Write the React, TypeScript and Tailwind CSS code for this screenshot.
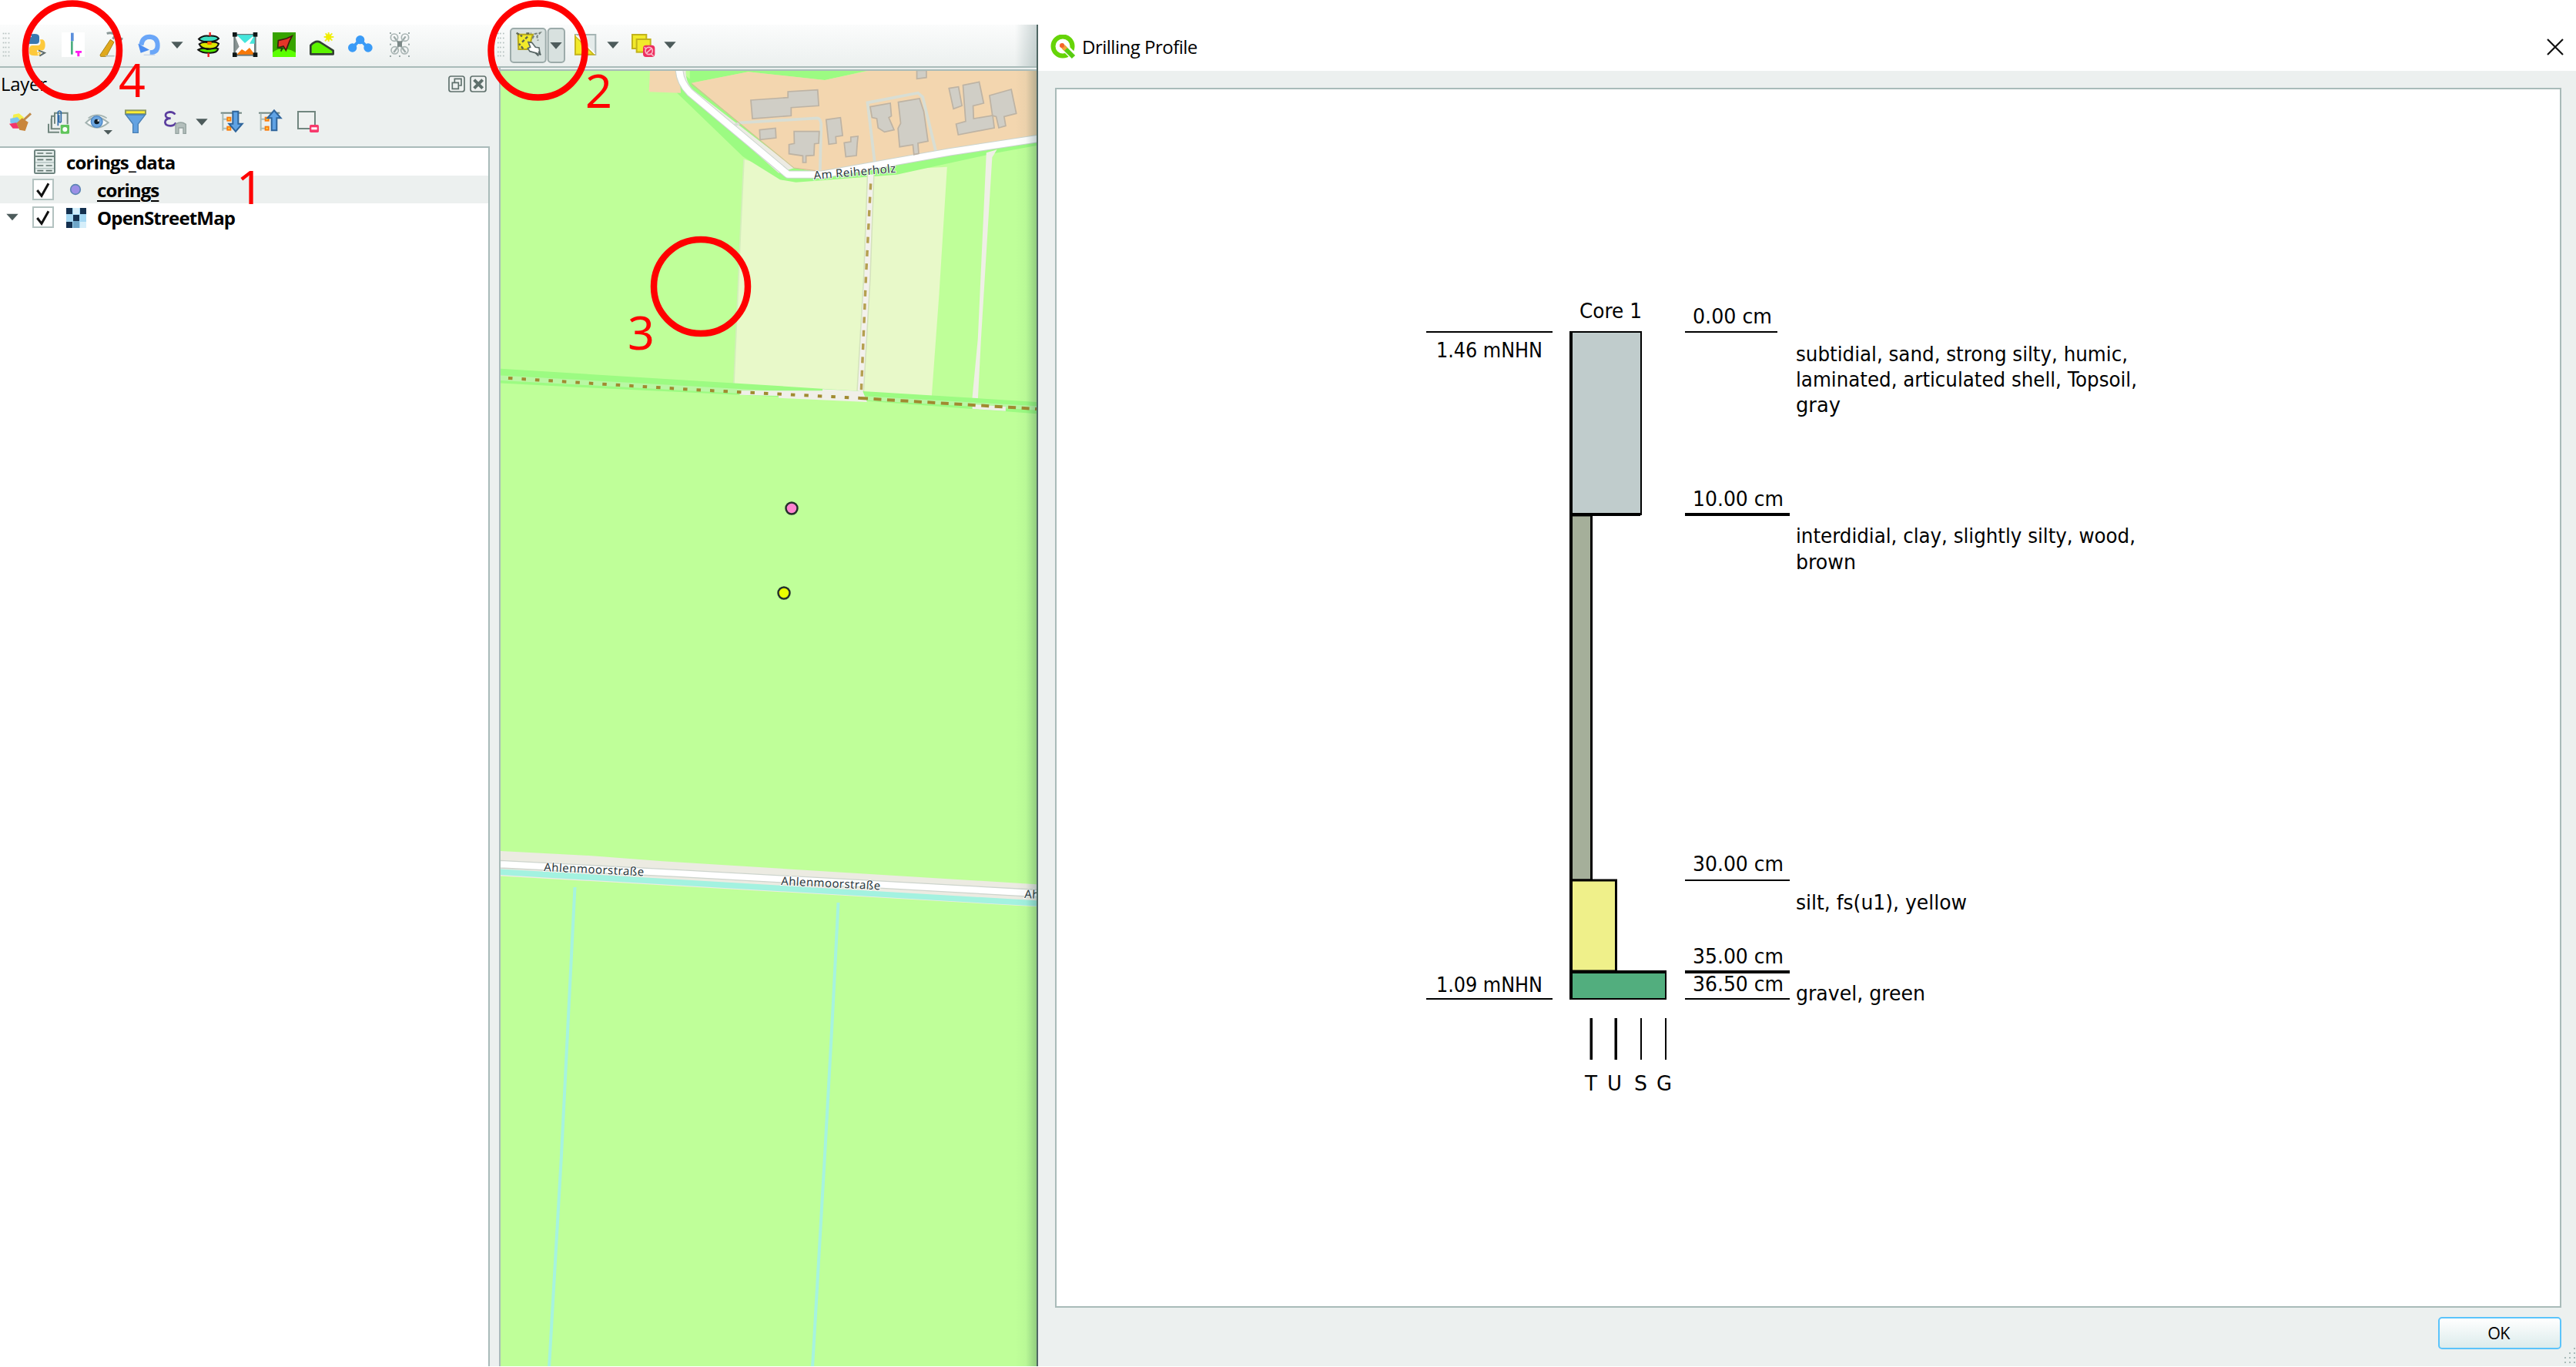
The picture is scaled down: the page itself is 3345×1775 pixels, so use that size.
import React from "react";

const UI = "font-['Open_Sans','Noto_Sans',sans-serif]";

/* Icon cell: draws one slot of a toolbar, three drawing units per pixel. */
function Slot({ x, y, w, h, className, children }: { x: number; y: number; w: number; h: number; className: string; children: React.ReactNode }) {
  return (
    <svg className={"block shrink-0 " + className} viewBox={`${x * 3} ${y * 3} ${w * 3} ${h * 3}`}>
      {children}
    </svg>
  );
}

function Grip({ x }: { x: number }) {
  return (
    <g fill="#b4bfbe">
      {[128, 146, 164, 182, 200, 215].map((y) => [0, 9, 21].map((d, i) => <rect key={y + "-" + i} x={x + d} y={y} width="5" height="5" />))}
    </g>
  );
}

const Caret = ({ x, y }: { x: number; y: number }) => <path d={`M${x - 23} ${y}h46l-23 26z`} fill="#4d5b5b" />;

function PluginToolbar() {
  return (
    <div className="flex h-[54px] w-[636px] shrink-0">
      <Slot x={0} y={32} w={28} h={54} className="w-[28px]"><Grip x={11} /></Slot>
      <Slot x={28} y={32} w={44} h={54} className="w-[44px]">
        <path d="M112 152v-10q0-10 22-10 19 0 19 12v15q0 12-13 12h-24q-10 0-12 13H94v-16q0-13 14-15z" fill="#3a78b0" />
        <path d="M156 154h10q10 4 10 22 0 16-10 20h-22v7h14v6q-2 8-22 8t-22-10v-18q2-12 13-12h22q9-1 9-12z" fill="#fdc93b" />
        <circle cx="120" cy="142" r="3" fill="#fff" /><circle cx="149" cy="210" r="3" fill="#fff" />
        <path d="M150 196l24 10-20 12" fill="none" stroke="#5d6b6b" strokeWidth="6" />
      </Slot>
      <Slot x={72} y={32} w={48} h={54} className="w-[48px]">
        <rect x="240" y="126" width="90" height="96" fill="#fff" />
        <rect x="276" y="128" width="11" height="32" fill="#5b8fdc" />
        <rect x="276" y="160" width="8" height="52" fill="#4cae80" />
        <path d="M294 198h24v8h-8v14h-9v-14h-7z" fill="#ff1df0" />
      </Slot>
      <Slot x={120} y={32} w={52} h={54} className="w-[52px]">
        <path d="M390 214l40-60 14 10-30 56h-22z" fill="#e0a91c" stroke="#a8841c" strokeWidth="3" />
        <path d="M416 130q22-6 32 6l12 12 18 4M440 152l8-14" fill="none" stroke="#8a9797" strokeWidth="9" />
        <path d="M410 218h36" stroke="#b5c0bf" strokeWidth="5" />
      </Slot>
      <Slot x={172} y={32} w={42} h={54} className="w-[42px]">
        <path d="M550 176q4-33 34-33 30 2 30 34 0 28-30 28" fill="none" stroke="#6aa6f8" strokeWidth="18" />
        <path d="M538 170l10 36 34-12z" fill="#4c8df0" /><path d="M560 214h44" stroke="#c5d4e8" strokeWidth="4" />
      </Slot>
      <Slot x={214} y={32} w={34} h={54} className="w-[34px]"><Caret x={690} y={163} /></Slot>
      <Slot x={248} y={32} w={46} h={54} className="w-[46px]">
        <path d="M772 194q16-10 36-2 30-8 42-2-4 18-38 16-26 0-40-12z" fill="#54e800" stroke="#111" strokeWidth="6" />
        <path d="M776 172q14-12 36-6 28-6 40 4-6 22-40 20-28 0-36-18z" fill="#dbe600" stroke="#111" strokeWidth="6" />
        <path d="M774 152q16-16 40-12 30-2 38 10-14 14-40 12-28 2-38-10z" fill="#3fe0c4" stroke="#111" strokeWidth="6" />
        <path d="M818 126v14M812 206v16" stroke="#f01c1c" strokeWidth="7" /><rect x="808" y="162" width="16" height="12" fill="#f60" />
      </Slot>
      <Slot x={294} y={32} w={50} h={54} className="w-[50px]">
        <rect x="914" y="136" width="80" height="78" fill="#fff" stroke="#6d7b7b" strokeWidth="8" />
        <path d="M922 136h70l-38 32z" fill="#45e6dc" /><path d="M916 142l16 40-16 20z" fill="#8a9594" />
        <path d="M922 212l20-20 14 8 16-14 20 26z" fill="#f87808" /><path d="M972 170l20-34v34z" fill="#45e6dc" />
        <g fill="#0f1818"><rect x="906" y="126" width="17" height="17" /><rect x="986" y="126" width="17" height="17" /><rect x="906" y="205" width="17" height="17" /><rect x="986" y="205" width="17" height="17" /></g>
      </Slot>
      <Slot x={344} y={32} w={50} h={54} className="w-[50px]">
        <rect x="1062" y="126" width="90" height="96" fill="#37a300" />
        <path d="M1062 205q20-18 40-12 26-4 50 12v17h-90z" fill="#5bff00" />
        <path d="M1084 158l32-8 22-10-10 20-14 36-10-16-22 6z" fill="#e53528" stroke="#451a10" strokeWidth="5" />
        <path d="M1080 184l20 4-6 12" fill="none" stroke="#1d4a0a" strokeWidth="6" />
      </Slot>
      <Slot x={394} y={32} w={50} h={54} className="w-[50px]">
        <path d="M1210 211v-34q20-22 38-12l50 32v14z" fill="#5cf400" stroke="#333f33" strokeWidth="8" strokeLinejoin="round" />
        <path d="M1280 126v36M1262 144h38M1268 130l26 28M1294 130l-28 30" stroke="#eef01c" strokeWidth="6" /><circle cx="1280" cy="144" r="11" fill="#f2ec00" />
      </Slot>
      <Slot x={444} y={32} w={50} h={54} className="w-[50px]">
        <path d="M1373 186l30-32 30 32" fill="none" stroke="#3a9bf7" strokeWidth="12" />
        <g fill="#3a9bf7"><circle cx="1403" cy="155" r="17" /><circle cx="1373" cy="186" r="17" /><circle cx="1434" cy="186" r="17" /></g>
      </Slot>
      <Slot x={494} y={32} w={50} h={54} className="w-[50px]">
        <path d="M1534 142l46 62M1580 142l-46 62" stroke="#9daaa9" strokeWidth="7" />
        <g fill="none" stroke="#a9b5b4" strokeWidth="5"><circle cx="1536" cy="146" r="14" /><circle cx="1578" cy="146" r="14" /><circle cx="1538" cy="196" r="14" /><circle cx="1576" cy="196" r="14" /></g>
        <rect x="1548" y="160" width="18" height="22" fill="#7b8887" />
        <g fill="#9aa8a7">{[1518, 1554, 1590].map((x) => [126, 216].map((y) => <rect key={x + "," + y} x={x} y={y} width="6" height="6" />))}<rect x="1518" y="170" width="6" height="6" /><rect x="1590" y="170" width="6" height="6" /></g>
      </Slot>
    </div>
  );
}

function SelectionToolbar() {
  return (
    <div className="flex h-[54px] grow">
      <Slot x={636} y={32} w={24} h={54} className="w-[24px]"><Grip x={1938} /></Slot>
      <Slot x={660} y={32} w={50} h={54} className="w-[50px]">
        <rect x="1989" y="111" width="137" height="132" rx="12" fill="#d8e1df" stroke="#9cabaa" strokeWidth="6" />
        <path d="M2018 134h58l-8 26 6 32h-54z" fill="#f2ea2a" stroke="#b6a81c" strokeWidth="6" />
        <path d="M2012 128l22 14M2034 164l24-24M2038 190l-16-20M2050 130h20" fill="none" stroke="#5f6650" strokeWidth="7" strokeDasharray="12 6" />
        <path d="M2074 150l10-18 20-4-12 14 4 16" fill="none" stroke="#77827c" strokeWidth="6" strokeDasharray="12 6" />
        <path d="M2058 164l14 2 14 18 14 2 4 26-18-6-22-6-8-12 10-4z" fill="#fff" stroke="#5b6968" strokeWidth="5" /><path d="M2086 206l12 12M2098 200l8 14" stroke="#556463" strokeWidth="6" />
      </Slot>
      <Slot x={710} y={32} w={26} h={54} className="w-[26px]">
        <rect x="2135" y="111" width="64" height="132" rx="12" fill="#d8e1df" stroke="#9cabaa" strokeWidth="6" /><Caret x={2166} y={165} />
      </Slot>
      <Slot x={736} y={32} w={46} h={54} className="w-[46px]">
        <rect x="2241" y="135" width="79" height="78" fill="#e4ebea" stroke="#a5b5b4" strokeWidth="6" />
        <path d="M2241 140l72 72h-72z" fill="#f2ea2a" stroke="#c9b71c" strokeWidth="6" /><path d="M2244 138l74 72" stroke="#fff" strokeWidth="5" />
      </Slot>
      <Slot x={782} y={32} w={30} h={54} className="w-[30px]"><Caret x={2388} y={163} /></Slot>
      <Slot x={812} y={32} w={44} h={54} className="w-[44px]">
        <g fill="#f2ea2a" stroke="#c2b31c" strokeWidth="6"><rect x="2463" y="135" width="55" height="54" /><rect x="2480" y="153" width="54" height="50" /></g>
        <rect x="2505" y="176" width="46" height="46" rx="12" fill="#ee2f5f" /><g fill="none" stroke="#f9b7c7" strokeWidth="5"><circle cx="2528" cy="198" r="14" /><path d="M2517 208l22-20M2510 184l8 6M2536 210l10 8" /></g>
      </Slot>
      <Slot x={856} y={32} w={30} h={54} className="w-[30px]"><Caret x={2610} y={163} /></Slot>
    </div>
  );
}

function TreeIcon({ x }: { x: number }) {
  return (
    <g>
      <path d={`M${x} 440h82`} stroke="#6f8580" strokeWidth="6" />
      <path d={`M${x + 8} 443v66M${x + 8} 464h18M${x + 8} 500h18`} fill="none" stroke="#a9bbb9" strokeWidth="6" />
      <g fill="#ffe14a" stroke="#fa7d0f" strokeWidth="6"><rect x={x + 26} y="458" width="12" height="12" /><rect x={x + 26} y="494" width="12" height="12" /></g>
    </g>
  );
}

function LayerTools() {
  return (
    <div className="flex h-[58px] shrink-0">
      <Slot x={0} y={132} w={52} h={58} className="w-[52px]">
        <path d="M52 446l22-4 20 16-14 20-32-8z" fill="#f5f04a" /><path d="M40 462l28-6 12 14-20 18-20-10z" fill="#7cc6f0" /><path d="M36 482l28-4 10 22-24 0z" fill="#f5356a" />
        <path d="M64 480l22-20 24 16-12 34-22-4z" fill="#c9863c" /><path d="M92 468l28-26" stroke="#c08a4a" strokeWidth="9" />
      </Slot>
      <Slot x={52} y={132} w={48} h={58} className="w-[48px]">
        <g fill="none" stroke="#71867f" strokeWidth="6"><path d="M189 482v33h42M200 462v40h34" /><path d="M213 482v-42h50v44M201 500v-48h14" /></g>
        <path d="M226 490v-54q6-8 12 0v38q-4 6-8 0v-26" fill="none" stroke="#2f6aa8" strokeWidth="5" />
        <rect x="236" y="486" width="34" height="35" rx="4" fill="#5fc45a" /><circle cx="253" cy="504" r="9" fill="#fff" />
      </Slot>
      <Slot x={100} y={132} w={54} h={58} className="w-[54px]">
        <path d="M334 478q40-42 88 0-44 38-88 0z" fill="#f8fafa" stroke="#a3b3b1" strokeWidth="6" /><path d="M344 460q34-24 72 0" fill="none" stroke="#a3b3b1" strokeWidth="5" />
        <circle cx="377" cy="474" r="22" fill="#6ca6e0" stroke="#4d86c4" strokeWidth="4" /><circle cx="377" cy="474" r="10" fill="#0f1c28" /><rect x="380" y="466" width="6" height="7" fill="#fff" />
        <path d="M404 507h34l-17 17z" fill="#4d5b5b" />
      </Slot>
      <Slot x={154} y={132} w={46} h={58} className="w-[46px]">
        <rect x="489" y="430" width="78" height="14" fill="#ffee33" stroke="#8d9a62" strokeWidth="6" />
        <path d="M490 447h76l-28 36v34h-20v-34z" fill="#64a3e2" stroke="#4a80b4" strokeWidth="4" />
      </Slot>
      <Slot x={200} y={132} w={50} h={58} className="w-[50px]">
        <path d="M682 446q-6-10-20-10-18 2-17 14 1 10 20 11-22 1-22 16 2 13 20 13 16 0 22-12" fill="none" stroke="#5a3d9e" strokeWidth="8" />
        <path d="M684 520v-36q20-14 40 0v36h-10v-22h-18v22z" fill="#b3bfbc" stroke="#95a3a0" strokeWidth="4" />
      </Slot>
      <Slot x={250} y={132} w={30} h={58} className="w-[30px]"><Caret x={786} y={463} /></Slot>
      <Slot x={280} y={132} w={48} h={58} className="w-[48px]"><TreeIcon x={860} /><path d="M907 434h21v48h16l-26 30-26-30h15z" fill="#5fa2e4" stroke="#2f659c" strokeWidth="6" /></Slot>
      <Slot x={328} y={132} w={48} h={58} className="w-[48px]"><TreeIcon x={1008} /><path d="M1058 508v-48h-16l26-30 26 30h-16v48z" fill="#5fa2e4" stroke="#2f659c" strokeWidth="6" /></Slot>
      <Slot x={376} y={132} w={50} h={58} className="w-[50px]">
        <rect x="1161" y="435" width="66" height="66" fill="#eef1f0" stroke="#71867f" strokeWidth="6" /><rect x="1206" y="486" width="36" height="30" rx="5" fill="#f73a6c" /><rect x="1213" y="496" width="22" height="9" fill="#fff" />
      </Slot>
    </div>
  );
}

function Check({ y }: { y: number }) {
  return (
    <g>
      <rect x="129" y={y} width="78" height="78" fill="#fff" stroke="#b3c2c0" strokeWidth="6" />
      <path d={`M145 ${y + 42}l17 22 27-48`} fill="none" stroke="#111" strokeWidth="9" />
    </g>
  );
}

function LayersPanel() {
  return (
    <div className="flex w-[648px] shrink-0 flex-col bg-[#ecf0ef]">
      <div className="flex h-[44px] shrink-0 justify-between">
        <span className={`${UI} pl-[1px] pt-[4px] text-[24px] leading-[34px] tracking-[-0.3px] text-black`}>Layer</span>
        <Slot x={576} y={88} w={72} h={44} className="w-[72px]">
          <g fill="#eef1f0" stroke="#5f706c" strokeWidth="5">
            <rect x="1749" y="297" width="60" height="60" rx="8" /><rect x="1833" y="297" width="60" height="60" rx="8" />
            <path d="M1771 320v-13h26v26h-8M1762 322h24v24h-24z" fill="none" />
          </g>
          <path d="M1847 311l33 33M1880 311l-33 33" stroke="#5f706c" strokeWidth="12" />
        </Slot>
      </div>
      <LayerTools />
      <div className={`${UI} w-[636px] grow border-r-2 border-t-2 border-[#a9bbb9] bg-white text-[24px] font-bold leading-[38px] text-black`}>
        <div className="flex h-[36px]">
          <Slot x={0} y={192} w={86} h={36} className="w-[86px]">
            <rect x="135" y="585" width="78" height="90" rx="4" fill="#e6eeec" stroke="#6f8580" strokeWidth="6" />
            <path d="M135 609h78" stroke="#71867f" strokeWidth="6" /><path d="M138 633h72M138 656h72" stroke="#b4c4c1" strokeWidth="4" />
            <path d="M145 597h58M145 622h58M145 645h58M145 665h58" stroke="#61756f" strokeWidth="5" strokeDasharray="24 10" />
          </Slot>
          <span className="tracking-[-0.82px]">corings_data</span>
        </div>
        <div className="flex h-[36px] bg-[#ecf0ef]">
          <Slot x={0} y={228} w={126} h={36} className="w-[126px]"><Check y={699} /><circle cx="294" cy="738" r="19" fill="#9b8fe6" stroke="#5d86b4" strokeWidth="5" /></Slot>
          <span className="tracking-[-0.9px] underline decoration-2 underline-offset-[4px]">corings</span>
        </div>
        <div className="flex h-[36px]">
          <Slot x={0} y={264} w={126} h={36} className="w-[126px]">
            <Caret x={48} y={833} /><Check y={807} />
            <rect x="258" y="810" width="78" height="78" fill="#a5d8f3" />
            <g fill="#14304f"><path d="M258 810h24v24h-24zM312 810h24v24h-24zM285 837h24v24h-24zM258 864h24v24h-24z" /></g>
            <path d="M285 810h24v24h-24zM312 864h24v24h-24z" fill="#d5eefa" /><path d="M285 861h24v27h-24z" fill="#6fa6c8" />
          </Slot>
          <span className="tracking-[-0.82px]">OpenStreetMap</span>
        </div>
      </div>
    </div>
  );
}

const fields = "M424 440L610 500 1190 470 1160 965 1132 1362 386 1318 404 880z";

function MapCanvas() {
  const street = "font-['Noto_Sans',sans-serif] text-[15px]";
  return (
    <svg className="block w-[696px] grow" viewBox="650 92 696 1683" preserveAspectRatio="xMinYMin slice">
      <defs>
        <linearGradient id="edge"><stop offset="0" stopColor="#003838" stopOpacity="0" /><stop offset="0.5" stopColor="#003838" stopOpacity="0.03" /><stop offset="1" stopColor="#003030" stopOpacity="0.24" /></linearGradient>
      </defs>
      <rect x="650" y="92" width="700" height="1690" fill="#bfff99" />
      <g transform="translate(820 60) scale(.34439 .33333)">
        <path d={fields} fill="#e8f9c9" />
        <path d="M424 440L412 700 386 1316" fill="none" stroke="#d3eebb" strokeWidth="5" />
        <path d="M160 170L420 430 560 520 620 530 1000 500 1380 415 1540 385V350L1000 440 600 470 200 110z" fill="#9cfb82" />
        <path d="M220 90h690l-180 42-290-32-220 45z" fill="#9cfb82" />
        <path d="M70 90h110l6 92-120-4z" fill="#f3d6af" />
        <path d="M226 143L440 100 728 132 920 90H1540V345L920 462 700 490 615 474 480 360z" fill="#f3d6af" />
        <path d="M205 90q-3 60 40 90l370 294-60 20L190 160 178 90z" fill="#ecebe3" />
        <path d="M385 310l24-12 292-18q12 2 14 24l-4 180M918 460L890 220l190-38 18 16 52 222" fill="none" stroke="#d8ded4" strokeWidth="11" />
        <path d="M180 90q2 50 40 90l370 320h130l480-88 345-54" fill="none" stroke="#cbd5cf" strokeWidth="31" strokeLinejoin="round" />
        <path d="M180 90q2 50 40 90l370 320h130l480-88 345-54" fill="none" stroke="#fff" strokeWidth="25" strokeLinejoin="round" />
        <path d="M226 146L480 362 612 474 705 486" fill="none" stroke="#d3bd95" strokeWidth="3" />
        <g fill="#d0cec6" stroke="#bdb3a4" strokeWidth="5">
          <path d="M450 210l140-10v-23l112-7 4 62-104 7v32l-146 11z" />
          <path d="M483 326l60-7 2 38-60 7zM613 332h95l-2 46-16 2-2 45-30 2v26h-12v-26l-52-8v-36l20-4z" />
          <path d="M734 286l54-8 8 70-26 4 2 26-28 4zM802 376l25-4v-18l27-3-3 30-3 45-40 5z" />
          <path d="M900 236l76-14 4 50-10 6 20 48-36 8-24-16-5-36-18-4zM1006 218l80-14 16 50 16 116-38 8 3 40-18 4-4-38-50 8-6-72 10-20z" />
          <path d="M1076 94h36v28l-36 5zM1197 164l36-6 13 74-32 12zM1250 152l61-13 17 83-40 10 2 50 72-12 6 48-136 27-8-42 36-10z" />
          <path d="M1350 192l82-24 19 94-46 12 6 36-26 8-10-44-14-4z" />
        </g>
        <path d="M902 500L888 900 862 1362" fill="none" stroke="#d5e3bd" strokeWidth="29" />
        <path d="M902 500L888 900 862 1362" fill="none" stroke="#f3f1ec" strokeWidth="20" />
        <path d="M902 535L884 900 866 1350" fill="none" stroke="#b5a050" strokeWidth="10" strokeDasharray="24 28" />
        <path d="M1338 415l40-12-18 30L1318 1140l-12 240h-22l22-240z" fill="#efefe6" />
      </g>
      <g transform="translate(640 450) scale(.45922 .33333)">
        <path d="M20 86L930 164 1540 216V262L1060 212 240 158 20 142z" fill="#9cfb82" />
        <path d="M20 112L700 165 1040 192 1540 232V248L1040 208 20 132z" fill="#b9f7a4" />
        <path d="M698 172h234v-6l114 8 12 42-250-16v-8l-110-4zM1356 225l94 10v16l-94-8z" fill="#f0efe8" />
      </g>
      <path d="M660 491L900 506 1117 517" fill="none" stroke="#a08a30" strokeWidth="4" strokeDasharray="5.5 12" />
      <path d="M1117 517L1346 531" fill="none" stroke="#a08a30" strokeWidth="4" strokeDasharray="10 7.5" />
      <g transform="translate(640 1080) scale(.45922 .33333)">
        <path d="M20 75L260 92 480 115 1540 205V292L20 172z" fill="#ecebe2" />
        <path d="M20 112L520 148 1540 226V254L520 175 20 141z" fill="#fff" stroke="#cdd4cd" strokeWidth="4" />
        <path d="M20 145L1540 268V290L20 168z" fill="#a3f2e0" />
      </g>
      <g fill="none" stroke="#a6f3df" strokeWidth="4">
        <path d="M746.500 1152L738 1320 729 1500 713 1776" /><path d="M1088.500 1172L1081 1320 1071 1500 1055 1776" />
      </g>
      <g fill="#2c3a40" stroke="#fff" strokeWidth="1.600" paintOrder="stroke">
        <text className={street} transform="translate(706 1131) rotate(2.8)" textLength="130">Ahlenmoorstraße</text>
        <text className={street} transform="translate(1014 1149) rotate(2.8)" textLength="129">Ahlenmoorstraße</text>
        <text className={street} transform="translate(1330 1166) rotate(2.8)" textLength="129">Ahlenmoorstraße</text>
        <text className={street} transform="translate(1057 233) rotate(-5)" textLength="107">Am Reiherholz</text>
      </g>
      <g stroke="#24302c" strokeWidth="2.500"><circle cx="1028" cy="660" r="7.500" fill="#ff85d0" /><circle cx="1018" cy="770" r="7.500" fill="#eaff00" /></g>
      <rect x="1318" y="92" width="28" height="1690" fill="url(#edge)" />
    </svg>
  );
}

type Label = [number, number, number, string];
const labels: Label[] = [
  [2051, 413, 81, "Core 1"],
  [1865, 463.5, 138, "1.46 mNHN"],
  [1865, 1287.5, 138, "1.09 mNHN"],
  [2198, 419.5, 103, "0.00 cm"],
  [2198, 657, 118, "10.00 cm"],
  [2198, 1131, 118, "30.00 cm"],
  [2198, 1251, 118, "35.00 cm"],
  [2198, 1287, 118, "36.50 cm"],
  [2332, 469, 431, "subtidial, sand, strong silty, humic,"],
  [2332, 501.5, 443, "laminated, articulated shell, Topsoil,"],
  [2332, 535, 58, "gray"],
  [2332, 705, 441, "interdidial, clay, slightly silty, wood,"],
  [2332, 739, 78, "brown"],
  [2332, 1181, 222, "silt, fs(u1), yellow"],
  [2332, 1299, 168, "gravel, green"],
  [2058, 1415.5, 16, "T"],
  [2087, 1415.5, 19, "U"],
  [2122, 1415.5, 17, "S"],
  [2151, 1415.5, 20, "G"],
];

function ProfileChart() {
  return (
    <svg className="block h-full w-full" viewBox="1372 116 1952 1580">
      <g stroke="#000" strokeWidth="2">
        <path d="M2039 431h92v237h-92z" fill="#c0cccc" strokeWidth="2" />
        <path d="M2040 669h26.500v474h-26.500z" fill="#a5af9a" strokeWidth="3" />
        <path d="M2040 1143h58.500v118h-58.500z" fill="#eff08a" strokeWidth="3" />
        <path d="M2040 1263h123v34h-123z" fill="#52ae7e" strokeWidth="2" />
      </g>
      <path d="M2038 430h4v868h-4zM2038 666h92v4h-92zM2038 1260h126v4h-126z" />
      <path d="M1852 430h164v2h-164zM1852 1296h164v2h-164zM2188 430h120v2h-120zM2188 666h136v4h-136zM2188 1142h136v2h-136zM2188 1260h136v4h-136zM2188 1296h136v2h-136z" />
      <path d="M2064.500 1322h3.500v54h-3.500zM2096.500 1322h3.500v54h-3.500zM2130 1322h2v54h-2zM2162 1322h2v54h-2z" />
      <g className="font-['DejaVu_Sans_Condensed','DejaVu_Sans',sans-serif] text-[26.500px]" fontStretch="condensed">
        {labels.map(([x, y, w, t]) => (
          <text key={t} x={x} y={y} textLength={w} lengthAdjust="spacingAndGlyphs">{t}</text>
        ))}
      </g>
    </svg>
  );
}

function ProfileDialog() {
  return (
    <div className={`${UI} flex h-full grow flex-col border-l-2 border-[#4f6663] bg-[#ecf0ef] text-black`}>
      <div className="flex h-[60px] shrink-0 items-center bg-white">
        <svg className="ml-[15px] block h-[34px] w-[34px]" viewBox="0 0 34 34">
          <circle cx="17" cy="15" r="12.500" fill="none" stroke="#66d408" strokeWidth="6" />
          <path d="M20 17l14 14" stroke="#fff" strokeWidth="10" /><path d="M18 16l13 13" stroke="#58cc10" strokeWidth="6" /><path d="M15 13l6 6" stroke="#f5a33a" strokeWidth="6" /><circle cx="16" cy="14" r="3" fill="#f4632b" />
        </svg>
        <span className="mb-[3px] ml-[8px] text-[24px] leading-[34px] tracking-[-0.5px]">Drilling Profile</span>
        <svg className="mb-[3px] ml-auto mr-[16px] block h-[22px] w-[22px]" viewBox="0 0 22 22"><path d="M1 1l20 20M21 1L1 21" stroke="#111" strokeWidth="2.200" /></svg>
      </div>
      <div className="ml-[22px] mt-[22px] h-[1584px] w-[1956px] shrink-0 border-2 border-[#a9bbb9] bg-white"><ProfileChart /></div>
      <div className="flex pl-[1818px] pt-[12px]">
        <button className="h-[42px] w-[160px] shrink-0 rounded-[5px] border-2 border-[#5bc4fb] bg-linear-to-b from-white to-[#dcecec] pr-[3px] text-center text-[21.5px] leading-[36px] tracking-[-0.8px]">OK</button>
        <svg className="mt-[40px] block h-[22px] w-[19px]" viewBox="3326 1750 19 22">
          <g fill="#a9bbb9"><path d="M3342 1750h2v2h-2zM3336 1756h2v2h-2zM3342 1756h2v2h-2zM3330 1762h2v2h-2zM3336 1762h2v2h-2zM3342 1762h2v2h-2zM3330 1768h2v2h-2zM3336 1768h2v2h-2zM3342 1768h2v2h-2z" /></g>
        </svg>
      </div>
    </div>
  );
}

function Annotations() {
  return (
    <svg className="pointer-events-none absolute left-0 top-0 h-[500px] w-[1100px]" viewBox="0 0 1100 500">
      <g fill="none" stroke="#f00" strokeWidth="8.500"><circle cx="94" cy="65.500" r="61" /><circle cx="698.500" cy="65.500" r="61" /><circle cx="910" cy="372" r="61" /></g>
      <g fill="#f00" className="font-['Noto_Sans',sans-serif] text-[61px]">
        <text x="307" y="265">1</text><text x="760" y="140">2</text><text x="815" y="454">3</text><text x="154" y="126">4</text>
      </g>
    </svg>
  );
}

export default function App() {
  return (
    <div className="relative h-[1775px] w-[3345px] overflow-hidden bg-white pt-[32px]">
      <div className="flex h-[1742px]">
        <div className="flex h-full w-[1346px] shrink-0 flex-col">
          <div className="flex h-[56px] shrink-0 border-b-2 border-[#a9bbb9] bg-linear-to-b from-[#fbfcfc] to-[#ecf0ef]">
            <PluginToolbar />
            <SelectionToolbar />
            <div className="w-[28px] bg-linear-to-r from-transparent to-[#00303030]" />
          </div>
          <div className="flex min-h-0 grow">
            <LayersPanel />
            <div className="flex min-h-0 w-[698px] flex-col border-l-2 border-[#a9bbb9]">
              <div className="h-[4px] shrink-0 border-b-2 border-[#a9bbb9] bg-[#ecf0ef]" />
              <div className="flex min-h-0 grow"><MapCanvas /></div>
            </div>
          </div>
        </div>
        <ProfileDialog />
      </div>
      <Annotations />
    </div>
  );
}
